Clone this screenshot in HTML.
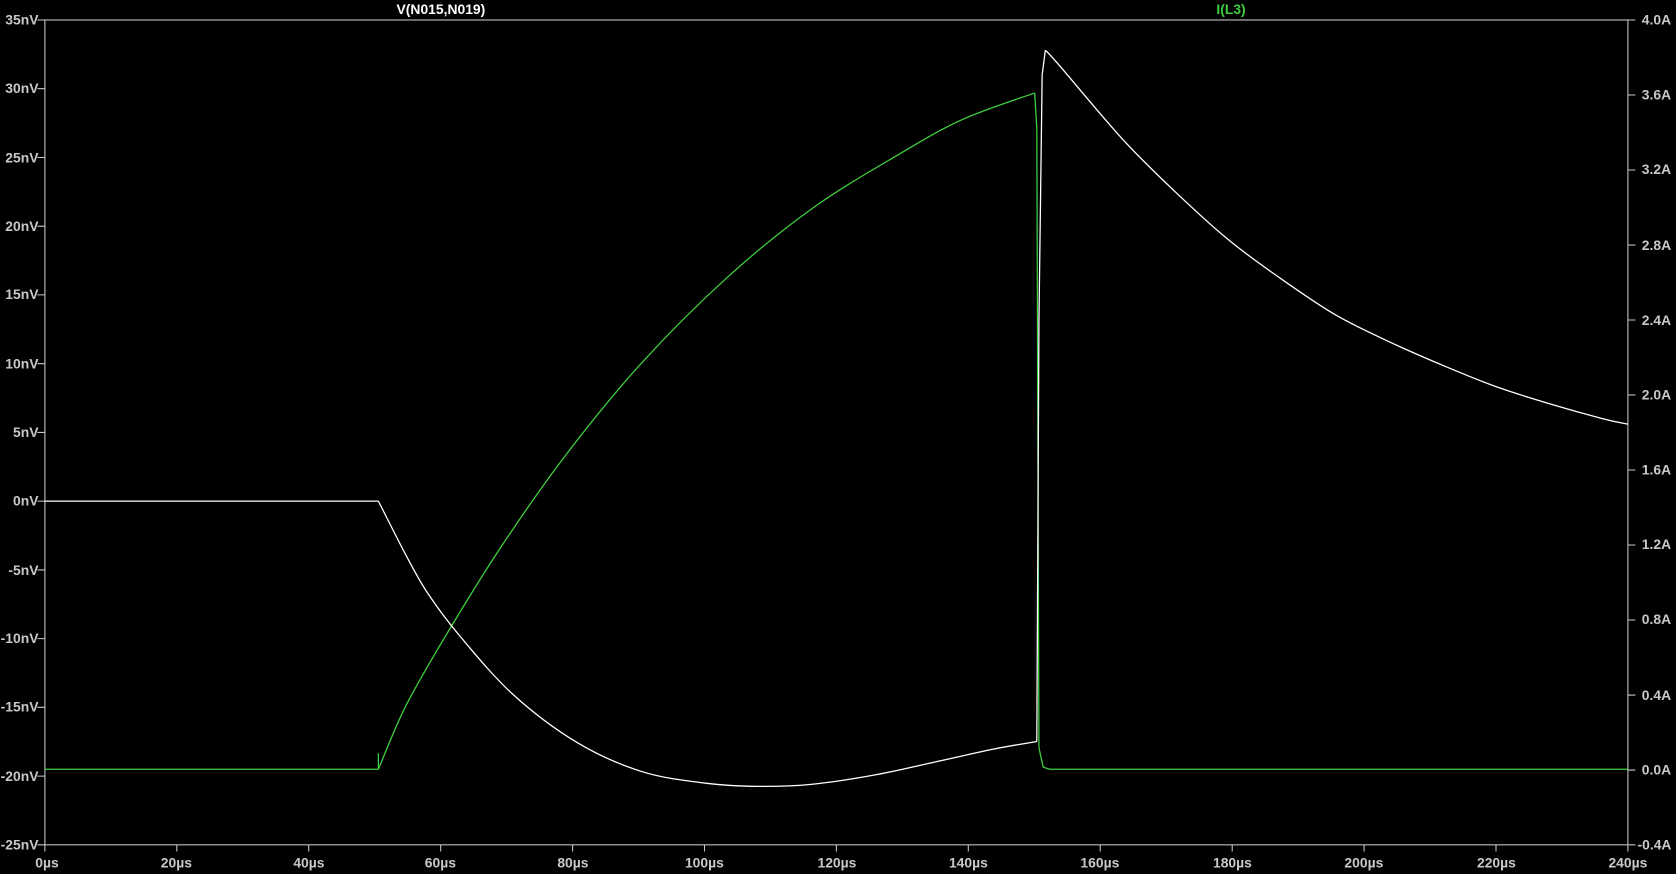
<!DOCTYPE html>
<html><head><style>
html,body{margin:0;padding:0;background:#000;overflow:hidden}
svg{display:block}
text{font-family:"Liberation Sans",sans-serif;font-weight:bold;font-size:13px;fill:#c8c8c8}
</style></head><body>
<svg width="1676" height="874" viewBox="0 0 1568 818" preserveAspectRatio="none">
<g stroke="#c8c8c8" stroke-width="1" fill="none">
<rect x="42" y="18.7" width="1481" height="772"/>
<path d="M35 18.7H42M35 83H42M35 147.4H42M35 211.7H42M35 276H42M35 340.4H42M35 404.7H42M35 469H42M35 533.4H42M35 597.7H42M35 662H42M35 726.4H42M35 790.7H42"/>
<path d="M1523 18.7H1530M1523 88.9H1530M1523 159.1H1530M1523 229.3H1530M1523 299.5H1530M1523 369.7H1530M1523 439.9H1530M1523 510.1H1530M1523 580.3H1530M1523 650.5H1530M1523 720.7H1530M1523 790.7H1530"/>
<path d="M42 790.7V797M165.4 790.7V797M288.8 790.7V797M412.3 790.7V797M535.7 790.7V797M659.1 790.7V797M782.5 790.7V797M905.9 790.7V797M1029.3 790.7V797M1152.8 790.7V797M1276.2 790.7V797M1399.6 790.7V797M1523 790.7V797"/>
</g>
<path fill="none" stroke="#3fcf3f" stroke-width="1.2" d="M42 720L354 720M354 705L354 720"/>
<path id="g1" fill="none" stroke="#3fcf3f" stroke-width="1.2" stroke-linejoin="round" d=""/>
<path fill="none" stroke="#3fcf3f" stroke-width="1.2" d="M968 87L970 120L972 700L976 718L982 720L1523 720"/>
<path fill="none" stroke="#fff" stroke-width="1.2" d="M42 469L354 469"/>
<path id="w1" fill="none" stroke="#fff" stroke-width="1.2" stroke-linejoin="round" d=""/>
<path fill="none" stroke="#fff" stroke-width="1.2" d="M970 694L972 300L975 70L978 47"/>
<path id="w2" fill="none" stroke="#fff" stroke-width="1.2" stroke-linejoin="round" d=""/>
<text x="371" y="13" style="fill:#fff">V(N015,N019)</text>
<text x="1138" y="13" style="fill:#3fcf3f">I(L3)</text>
<g text-anchor="end">
<text x="36" y="23">35nV</text><text x="36" y="87">30nV</text><text x="36" y="152">25nV</text><text x="36" y="216">20nV</text><text x="36" y="280">15nV</text><text x="36" y="345">10nV</text><text x="36" y="409">5nV</text><text x="36" y="473">0nV</text><text x="36" y="538">-5nV</text><text x="36" y="602">-10nV</text><text x="36" y="666">-15nV</text><text x="36" y="731">-20nV</text><text x="36" y="795">-25nV</text>
</g>
<g>
<text x="1536" y="23">4.0A</text><text x="1536" y="93">3.6A</text><text x="1536" y="163">3.2A</text><text x="1536" y="234">2.8A</text><text x="1536" y="304">2.4A</text><text x="1536" y="374">2.0A</text><text x="1536" y="444">1.6A</text><text x="1536" y="514">1.2A</text><text x="1536" y="584">0.8A</text><text x="1536" y="655">0.4A</text><text x="1536" y="725">0.0A</text><text x="1532" y="795">-0.4A</text>
</g>
<g text-anchor="middle">
<text x="44" y="812">0µs</text><text x="165" y="812">20µs</text><text x="289" y="812">40µs</text><text x="412" y="812">60µs</text><text x="536" y="812">80µs</text><text x="659" y="812">100µs</text><text x="783" y="812">120µs</text><text x="906" y="812">140µs</text><text x="1029" y="812">160µs</text><text x="1153" y="812">180µs</text><text x="1276" y="812">200µs</text><text x="1400" y="812">220µs</text><text x="1523" y="812">240µs</text>
</g>
</svg>
<script>
function cr(p){var d="M"+p[0][0]+" "+p[0][1];for(var i=0;i<p.length-1;i++){var a=p[i-1]||p[i],b=p[i],c=p[i+1],e=p[i+2]||c;
d+="C"+(b[0]+(c[0]-a[0])/6)+" "+(b[1]+(c[1]-a[1])/6)+" "+(c[0]-(e[0]-b[0])/6)+" "+(c[1]-(e[1]-b[1])/6)+" "+c[0]+" "+c[1];}return d;}
document.getElementById("g1").setAttribute("d",cr([[354,720],[380,660],[420,590],[470,510],[530,425],[600,340],[680,260],[760,195],[840,145],[900,112],[968,87]]));
document.getElementById("w1").setAttribute("d",cr([[354,469],[380,520],[400,555],[430,595],[480,650],[540,695],[600,722],[660,733],[710,736],[760,734],[820,725],[880,712],[930,701],[970,694]]));
document.getElementById("w2").setAttribute("d",cr([[978,47],[990,60],[1050,130],[1100,180],[1150,225],[1200,262],[1250,295],[1300,320],[1350,342],[1400,362],[1450,378],[1500,392],[1523,397]]));
</script>
</body></html>
